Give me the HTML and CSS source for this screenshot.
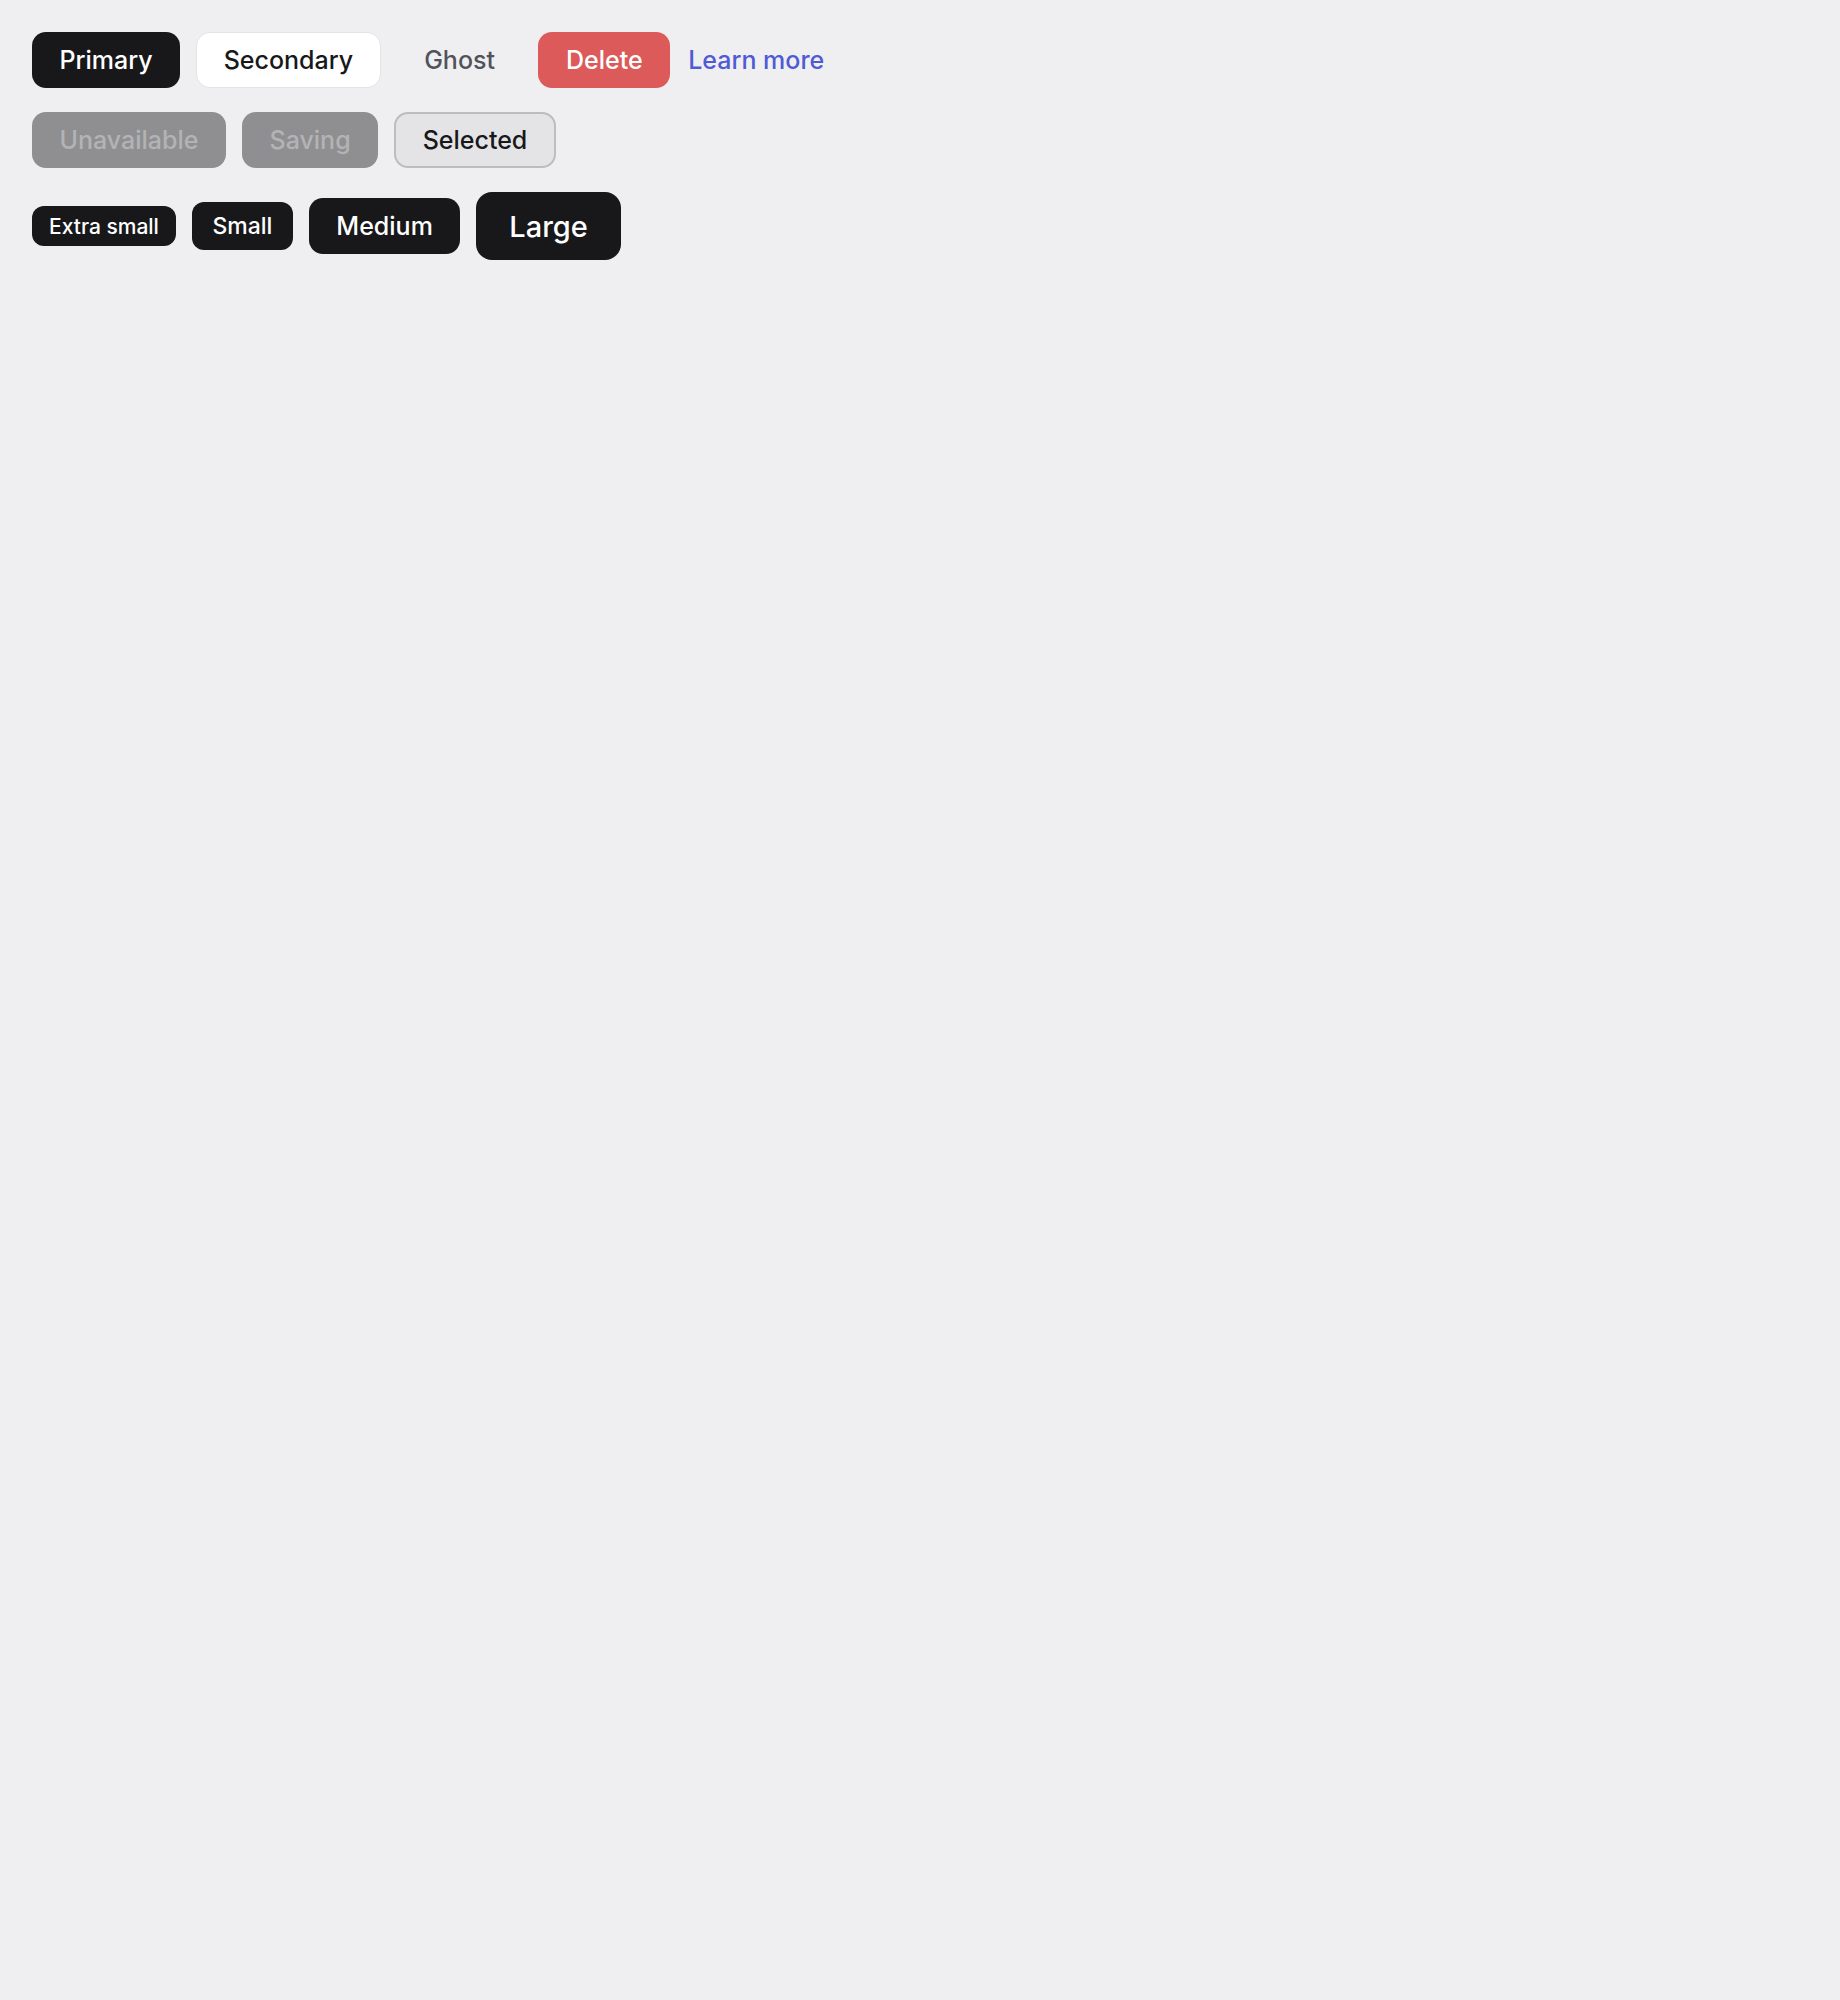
FILE: index.html
```html
<!DOCTYPE html>
<html lang="en">
<head>
  <meta charset="UTF-8">
  <title>Buttons</title>
  <link rel="stylesheet" href="styles.css">
</head>
<body>
<div class="page">
  <div class="row">
    <button class="btn primary">Primary</button>
    <button class="btn secondary">Secondary</button>
    <button class="btn ghost">Ghost</button>
    <button class="btn danger">Delete</button>
    <a class="link" href="#">Learn more</a>
  </div>
  <div class="row">
    <button class="btn disabled" disabled>Unavailable</button>
    <button class="btn disabled" disabled>Saving</button>
    <button class="btn selected">Selected</button>
  </div>
  <div class="row sizes">
    <button class="btn primary xs">Extra small</button>
    <button class="btn primary sm">Small</button>
    <button class="btn primary">Medium</button>
    <button class="btn primary lg">Large</button>
  </div>
</div>
</body>
</html>
```

FILE: styles.css
```css
* { box-sizing: border-box; }
html, body {
  margin: 0;
  height: 100%;
  background: #efeff1;
  font-family: Inter, 'Noto Sans', sans-serif;
}

.page {
  padding: 32px;
  display: flex;
  flex-direction: column;
  gap: 24px;
}

.row {
  display: flex;
  align-items: center;
  gap: 16px;
}

.btn {
  height: 56px;
  padding: 0 26.5px;
  border: 1px solid transparent;
  border-radius: 14px;
  font-family: inherit;
  font-size: 25px;
  font-weight: 500;
  cursor: pointer;
  white-space: nowrap;
}

.primary {
  background: #18181b;
  color: #fff;
}

.secondary {
  background: #fff;
  border-color: #e4e4e7;
  color: #18181b;
}

.ghost {
  background: transparent;
  color: #52525b;
}

.danger {
  background: #dc5a5a;
  color: #fff;
}

.link {
  color: #4f5bd5;
  font-size: 25px;
  font-weight: 500;
  text-decoration: none;
  margin-left: 2px;
}

.disabled {
  background: #8f8f91;
  color: #b3b3b6;
  cursor: not-allowed;
}

.selected {
  background: #e4e4e7;
  border: 2px solid #bdbdc0;
  color: #18181b;
}

.xs {
  height: 40px;
  padding: 0 16px;
  font-size: 21px;
  border-radius: 12px;
}

.sm {
  height: 48px;
  padding: 0 19.5px;
  font-size: 23px;
  border-radius: 12px;
}

.lg {
  height: 68px;
  padding: 0 32px;
  font-size: 29px;
  border-radius: 16px;
}
```
